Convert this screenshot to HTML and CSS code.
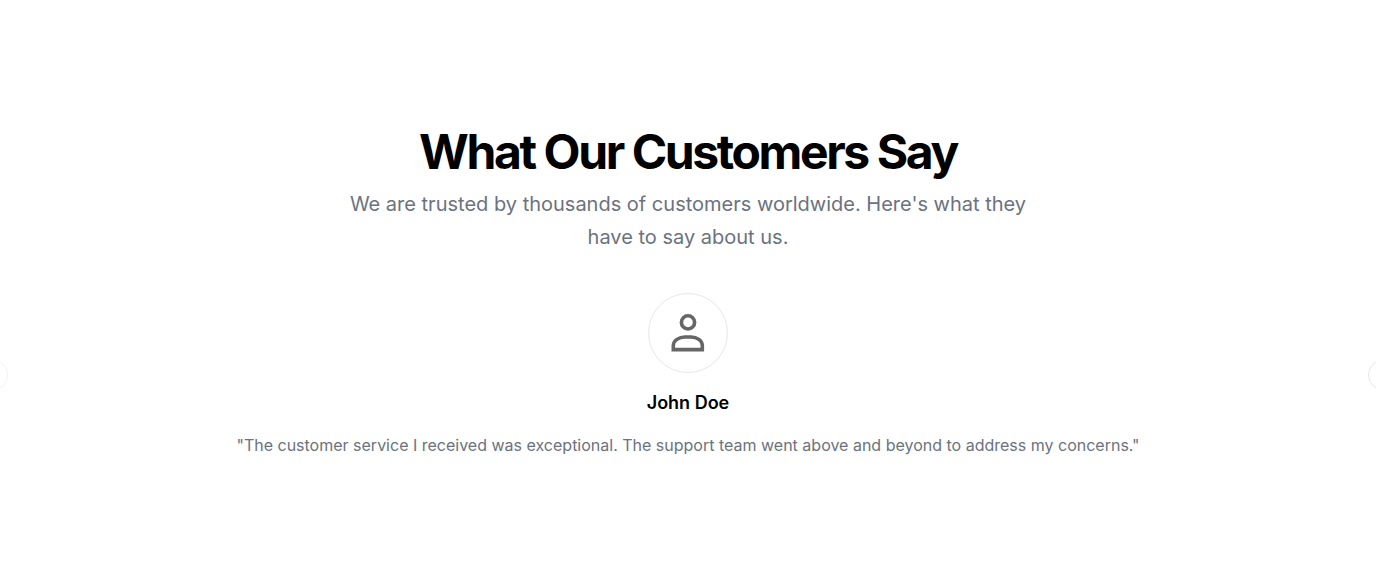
FILE: index.html
```html
<!DOCTYPE html>
<html lang="en">
<head>
<meta charset="utf-8">
<meta name="viewport" content="width=device-width, initial-scale=1">
<title>Testimonials</title>
<link rel="stylesheet" href="styles.css">
</head>
<body>
<section class="testimonials">
  <header class="intro">
    <h2 class="title">What Our Customers Say</h2>
    <p class="lead">We are trusted by thousands of customers worldwide. Here's what they have to say about us.</p>
  </header>
  <div class="carousel">
    <button class="nav nav-prev" type="button" aria-label="Previous slide" disabled></button>
    <figure class="slide">
      <div class="avatar">
        <svg class="avatar-icon" viewBox="0 0 78 78" aria-hidden="true">
          <circle cx="39" cy="28.400" r="6.600"/>
          <path d="M24.300 55.600V51.500C24.300 46.500 30 43 36 43H42C48 43 53.300 46.500 53.300 51.500V55.600Z"/>
        </svg>
      </div>
      <figcaption class="name">John Doe</figcaption>
      <blockquote class="quote">"The customer service I received was exceptional. The support team went above and beyond to address my concerns."</blockquote>
    </figure>
    <button class="nav nav-next" type="button" aria-label="Next slide"></button>
  </div>
</section>
</body>
</html>
```
FILE: styles.css
```css
* { box-sizing: border-box; }
body {
  margin: 0;
  background: #fff;
  color: #000;
  font-family: Inter, "Liberation Sans", sans-serif;
  overflow-x: hidden;
}
.testimonials { padding: 128px 0; }
.intro {
  max-width: 700px;
  margin: 0 auto;
  text-align: center;
}
.title {
  margin: 0;
  font-size: 48px;
  line-height: 48px;
  font-weight: 700;
  letter-spacing: -0.05em;
}
.lead {
  margin: 12px 0 0;
  color: #6b7280;
  font-size: 20px;
  line-height: 33px;
}
.carousel {
  position: relative;
  margin-top: 39px;
  overflow-x: clip;
}
.slide {
  display: flex;
  flex-direction: column;
  align-items: center;
  margin: 0;
  text-align: center;
}
.avatar {
  width: 80px;
  height: 80px;
  border: 1px solid #e5e7eb;
  border-radius: 50%;
  overflow: hidden;
}
.avatar-icon {
  display: block;
  width: 100%;
  height: 100%;
  fill: none;
  stroke: #666;
  stroke-width: 3.6;
}
.name {
  margin-top: 16px;
  font-size: 18px;
  line-height: 28px;
  font-weight: 600;
}
.quote {
  margin: 16px 0 0;
  color: #6b7280;
  font-size: 16px;
  line-height: 24px;
}
.nav {
  position: absolute;
  top: 50%;
  width: 32px;
  height: 32px;
  margin-top: -16px;
  padding: 0;
  border: 1px solid #e5e7eb;
  border-radius: 50%;
  background: #fff;
}
.nav:disabled { opacity: 0.5; }
.nav-prev { left: -24px; }
.nav-next { right: -24px; }
```
